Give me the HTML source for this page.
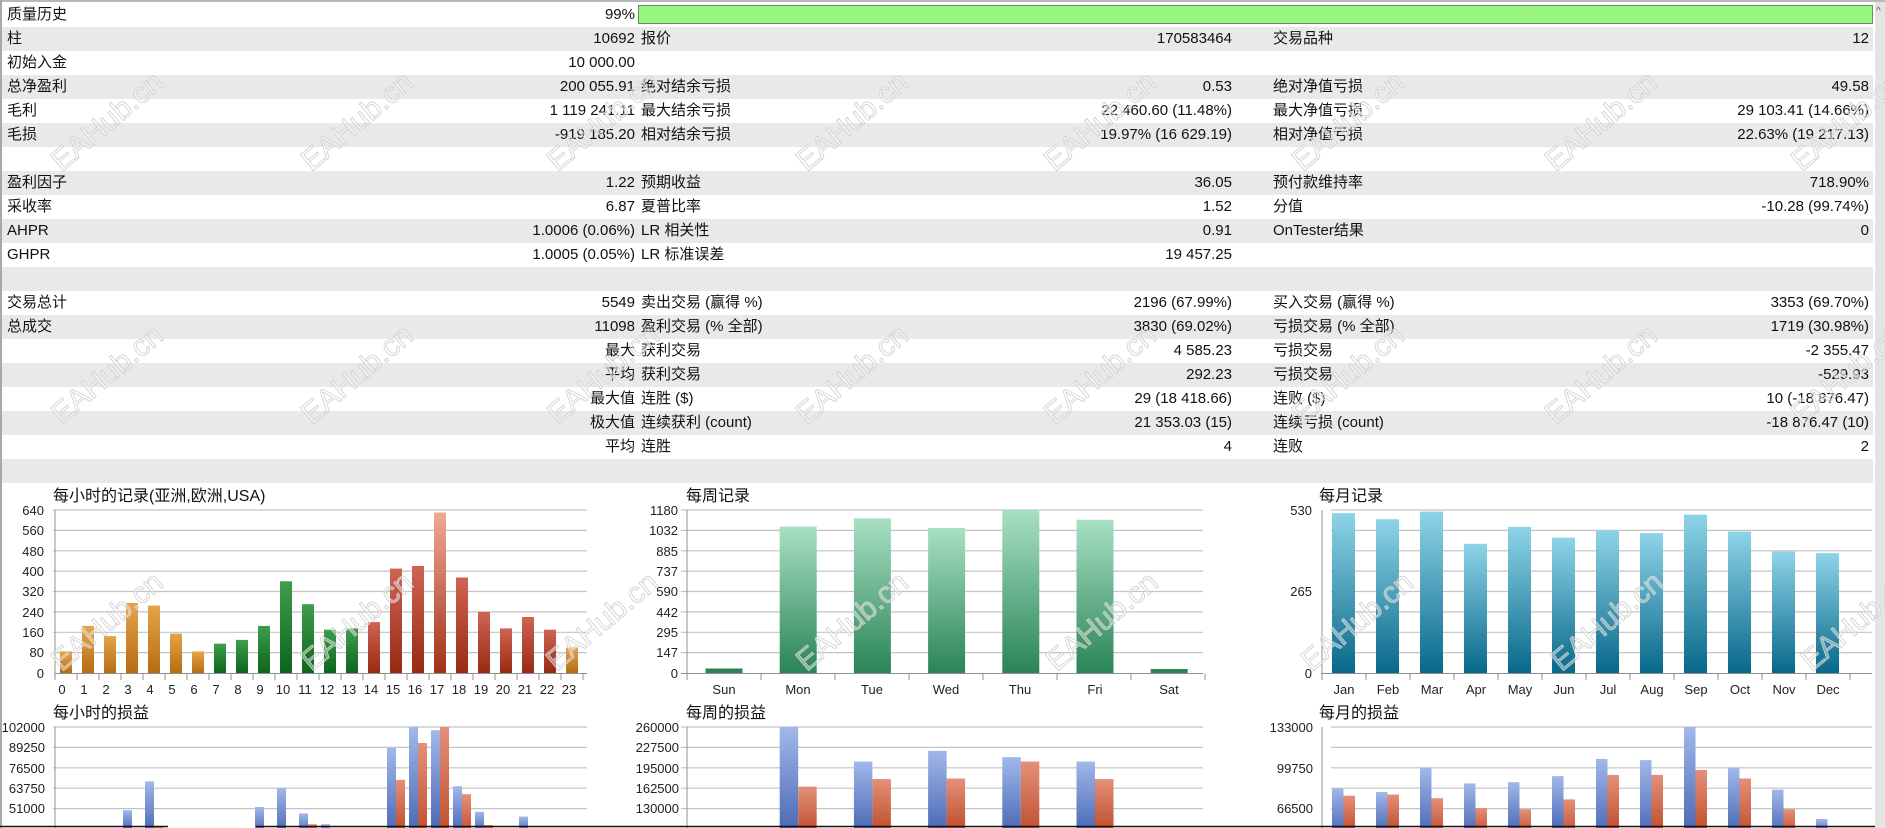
<!DOCTYPE html>
<html><head><meta charset="utf-8"><style>
*{margin:0;padding:0;box-sizing:border-box}
body{width:1885px;height:828px;overflow:hidden;background:#fff;position:relative;font-family:"Liberation Sans","Noto Sans CJK SC",sans-serif;font-size:15px;color:#111}
.r{position:absolute;left:2px;width:1871px;height:24px}
.g{background:#e9e9e9}
.t{position:absolute;line-height:24px;white-space:nowrap}
.wm{position:absolute;font-family:"Liberation Sans",sans-serif;font-size:30px;color:rgba(255,255,255,0.4);-webkit-text-stroke:0.8px #cfcfcf;transform:rotate(-40deg);white-space:nowrap;pointer-events:none}
svg text{font-family:"Liberation Sans","Noto Sans CJK SC",sans-serif}
</style></head><body>
<div style="position:absolute;left:0;top:0;width:1885px;height:2px;background:#b8b8b8"></div>
<div style="position:absolute;left:0;top:0;width:2px;height:828px;background:#a8a8a8"></div>
<div style="position:absolute;left:1875px;top:2px;width:10px;height:826px;background:#e4e4e4"></div>
<div style="position:absolute;left:1876px;top:6px;font-size:10px;color:#555">^</div>

<div class="r" style="top:3px"></div>
<div class="r g" style="top:27px"></div>
<div class="r g" style="top:75px"></div>
<div class="r g" style="top:123px"></div>
<div class="r g" style="top:171px"></div>
<div class="r g" style="top:219px"></div>
<div class="r g" style="top:267px"></div>
<div class="r g" style="top:315px"></div>
<div class="r g" style="top:363px"></div>
<div class="r g" style="top:411px"></div>
<div class="r g" style="top:459px"></div>

<div style="position:absolute;left:638px;top:5px;width:1235px;height:19px;background:#98f57e;border:1px solid #6a8a60"></div>
<div style="position:absolute;left:1530px;top:6px;width:1px;height:17px;background:#b8e8a8"></div>

<div class="t" style="left:7px;top:3px">质量历史</div><div class="t" style="right:1250px;top:3px">99%</div>
<div class="t" style="left:7px;top:27px">柱</div><div class="t" style="right:1250px;top:27px">10692</div>
<div class="t" style="left:7px;top:51px">初始入金</div><div class="t" style="right:1250px;top:51px">10 000.00</div>
<div class="t" style="left:7px;top:75px">总净盈利</div><div class="t" style="right:1250px;top:75px">200 055.91</div>
<div class="t" style="left:7px;top:99px">毛利</div><div class="t" style="right:1250px;top:99px">1 119 241.11</div>
<div class="t" style="left:7px;top:123px">毛损</div><div class="t" style="right:1250px;top:123px">-919 185.20</div>
<div class="t" style="left:7px;top:171px">盈利因子</div><div class="t" style="right:1250px;top:171px">1.22</div>
<div class="t" style="left:7px;top:195px">采收率</div><div class="t" style="right:1250px;top:195px">6.87</div>
<div class="t" style="left:7px;top:219px">AHPR</div><div class="t" style="right:1250px;top:219px">1.0006 (0.06%)</div>
<div class="t" style="left:7px;top:243px">GHPR</div><div class="t" style="right:1250px;top:243px">1.0005 (0.05%)</div>
<div class="t" style="left:7px;top:291px">交易总计</div><div class="t" style="right:1250px;top:291px">5549</div>
<div class="t" style="left:7px;top:315px">总成交</div><div class="t" style="right:1250px;top:315px">11098</div>
<div class="t" style="right:1250px;top:339px">最大</div>
<div class="t" style="right:1250px;top:363px">平均</div>
<div class="t" style="right:1250px;top:387px">最大值</div>
<div class="t" style="right:1250px;top:411px">极大值</div>
<div class="t" style="right:1250px;top:435px">平均</div>
<div class="t" style="left:641px;top:27px">报价</div><div class="t" style="right:653px;top:27px">170583464</div>
<div class="t" style="left:641px;top:75px">绝对结余亏损</div><div class="t" style="right:653px;top:75px">0.53</div>
<div class="t" style="left:641px;top:99px">最大结余亏损</div><div class="t" style="right:653px;top:99px">22 460.60 (11.48%)</div>
<div class="t" style="left:641px;top:123px">相对结余亏损</div><div class="t" style="right:653px;top:123px">19.97% (16 629.19)</div>
<div class="t" style="left:641px;top:171px">预期收益</div><div class="t" style="right:653px;top:171px">36.05</div>
<div class="t" style="left:641px;top:195px">夏普比率</div><div class="t" style="right:653px;top:195px">1.52</div>
<div class="t" style="left:641px;top:219px">LR 相关性</div><div class="t" style="right:653px;top:219px">0.91</div>
<div class="t" style="left:641px;top:243px">LR 标准误差</div><div class="t" style="right:653px;top:243px">19 457.25</div>
<div class="t" style="left:641px;top:291px">卖出交易 (赢得 %)</div><div class="t" style="right:653px;top:291px">2196 (67.99%)</div>
<div class="t" style="left:641px;top:315px">盈利交易 (% 全部)</div><div class="t" style="right:653px;top:315px">3830 (69.02%)</div>
<div class="t" style="left:641px;top:339px">获利交易</div><div class="t" style="right:653px;top:339px">4 585.23</div>
<div class="t" style="left:641px;top:363px">获利交易</div><div class="t" style="right:653px;top:363px">292.23</div>
<div class="t" style="left:641px;top:387px">连胜 ($)</div><div class="t" style="right:653px;top:387px">29 (18 418.66)</div>
<div class="t" style="left:641px;top:411px">连续获利 (count)</div><div class="t" style="right:653px;top:411px">21 353.03 (15)</div>
<div class="t" style="left:641px;top:435px">连胜</div><div class="t" style="right:653px;top:435px">4</div>
<div class="t" style="left:1273px;top:27px">交易品种</div><div class="t" style="right:16px;top:27px">12</div>
<div class="t" style="left:1273px;top:75px">绝对净值亏损</div><div class="t" style="right:16px;top:75px">49.58</div>
<div class="t" style="left:1273px;top:99px">最大净值亏损</div><div class="t" style="right:16px;top:99px">29 103.41 (14.66%)</div>
<div class="t" style="left:1273px;top:123px">相对净值亏损</div><div class="t" style="right:16px;top:123px">22.63% (19 217.13)</div>
<div class="t" style="left:1273px;top:171px">预付款维持率</div><div class="t" style="right:16px;top:171px">718.90%</div>
<div class="t" style="left:1273px;top:195px">分值</div><div class="t" style="right:16px;top:195px">-10.28 (99.74%)</div>
<div class="t" style="left:1273px;top:219px">OnTester结果</div><div class="t" style="right:16px;top:219px">0</div>
<div class="t" style="left:1273px;top:291px">买入交易 (赢得 %)</div><div class="t" style="right:16px;top:291px">3353 (69.70%)</div>
<div class="t" style="left:1273px;top:315px">亏损交易 (% 全部)</div><div class="t" style="right:16px;top:315px">1719 (30.98%)</div>
<div class="t" style="left:1273px;top:339px">亏损交易</div><div class="t" style="right:16px;top:339px">-2 355.47</div>
<div class="t" style="left:1273px;top:363px">亏损交易</div><div class="t" style="right:16px;top:363px">-529.93</div>
<div class="t" style="left:1273px;top:387px">连败 ($)</div><div class="t" style="right:16px;top:387px">10 (-18 876.47)</div>
<div class="t" style="left:1273px;top:411px">连续亏损 (count)</div><div class="t" style="right:16px;top:411px">-18 876.47 (10)</div>
<div class="t" style="left:1273px;top:435px">连败</div><div class="t" style="right:16px;top:435px">2</div>

<svg style="position:absolute;left:0;top:0" width="1875" height="828">
<defs>
<linearGradient id="go" x1="0" y1="0" x2="0" y2="1"><stop offset="0" stop-color="#e6a548"/><stop offset="1" stop-color="#b56c12"/></linearGradient>
<linearGradient id="gg" x1="0" y1="0" x2="0" y2="1"><stop offset="0" stop-color="#3f9d4d"/><stop offset="1" stop-color="#0e641c"/></linearGradient>
<linearGradient id="gr" x1="0" y1="0" x2="0" y2="1"><stop offset="0" stop-color="#cf6453"/><stop offset="1" stop-color="#982a12"/></linearGradient>
<linearGradient id="gp" x1="0" y1="0" x2="0" y2="1"><stop offset="0" stop-color="#f0a894"/><stop offset="1" stop-color="#a0321a"/></linearGradient>
<linearGradient id="gw" x1="0" y1="0" x2="0" y2="1"><stop offset="0" stop-color="#a8e0c4"/><stop offset="1" stop-color="#2a8456"/></linearGradient>
<linearGradient id="gm" x1="0" y1="0" x2="0" y2="1"><stop offset="0" stop-color="#8ed4e8"/><stop offset="1" stop-color="#08688a"/></linearGradient>
<linearGradient id="gb" x1="0" y1="0" x2="0" y2="1"><stop offset="0" stop-color="#a2b8ea"/><stop offset="1" stop-color="#4a68b4"/></linearGradient>
<linearGradient id="gq" x1="0" y1="0" x2="0" y2="1"><stop offset="0" stop-color="#e4907a"/><stop offset="1" stop-color="#c0502e"/></linearGradient>
</defs>
<g font-size="16" fill="#111">
<text x="53" y="501">每小时的记录(亚洲,欧洲,USA)</text>
<text x="686" y="501">每周记录</text>
<text x="1319" y="501">每月记录</text>
<text x="53" y="718">每小时的损益</text>
<text x="686" y="718">每周的损益</text>
<text x="1319" y="718">每月的损益</text>
</g>
<g stroke="#c4c4c4" stroke-width="1.2">
<path d="M53 510H587M53 530.4H587M53 550.8H587M53 571.1H587M53 591.5H587M53 611.9H587M53 632.3H587M53 652.6H587"/>
<path d="M681 510H1203M681 530.4H1203M681 550.8H1203M681 571.1H1203M681 591.5H1203M681 611.9H1203M681 632.3H1203M681 652.6H1203"/>
<path d="M1331 510H1872M1331 530.4H1872M1331 550.8H1872M1331 571.1H1872M1331 591.5H1872M1331 611.9H1872M1331 632.3H1872M1331 652.6H1872"/>
<path d="M53 727H587M53 747.4H587M53 767.8H587M53 788.2H587M53 808.6H587"/>
<path d="M681 727H1203M681 747.4H1203M681 767.8H1203M681 788.2H1203M681 808.6H1203"/>
<path d="M1331 727H1872M1331 747.4H1872M1331 767.8H1872M1331 788.2H1872M1331 808.6H1872"/>
</g>
<g stroke="#909090" stroke-width="1">
<path d="M55 673.5H587M55 673.5V680M77 673.5V680M99 673.5V680M121 673.5V680M143 673.5V680M165 673.5V680M187 673.5V680M209 673.5V680M231 673.5V680M253 673.5V680M275 673.5V680M297 673.5V680M319 673.5V680M341 673.5V680M363 673.5V680M385 673.5V680M407 673.5V680M429 673.5V680M451 673.5V680M473 673.5V680M495 673.5V680M517 673.5V680M539 673.5V680M561 673.5V680M583 673.5V680"/>
<path d="M681 673.5H1203M687 673.5V680M761 673.5V680M835 673.5V680M909 673.5V680M983 673.5V680M1057 673.5V680M1131 673.5V680M1205 673.5V680"/>
<path d="M1321 673.5H1872M1322 673.5V680M1366 673.5V680M1410 673.5V680M1454 673.5V680M1498 673.5V680M1542 673.5V680M1586 673.5V680M1630 673.5V680M1674 673.5V680M1718 673.5V680M1762 673.5V680M1806 673.5V680M1850 673.5V680"/>
<path d="M55 510V674M687 510V674M1322 510V674M55 727V828M687 727V828M1322 727V828"/>
</g>
<g font-size="13" fill="#222" text-anchor="end">
<text x="44" y="515">640</text><text x="44" y="535">560</text><text x="44" y="556">480</text><text x="44" y="576">400</text><text x="44" y="596">320</text><text x="44" y="617">240</text><text x="44" y="637">160</text><text x="44" y="657">80</text><text x="44" y="678">0</text>
<text x="678" y="515">1180</text><text x="678" y="535">1032</text><text x="678" y="556">885</text><text x="678" y="576">737</text><text x="678" y="596">590</text><text x="678" y="617">442</text><text x="678" y="637">295</text><text x="678" y="657">147</text><text x="678" y="678">0</text>
<text x="1312" y="515">530</text><text x="1312" y="596">265</text><text x="1312" y="678">0</text>
<text x="45" y="732">102000</text><text x="45" y="752">89250</text><text x="45" y="773">76500</text><text x="45" y="793">63750</text><text x="45" y="813">51000</text>
<text x="679" y="732">260000</text><text x="679" y="752">227500</text><text x="679" y="773">195000</text><text x="679" y="793">162500</text><text x="679" y="813">130000</text>
<text x="1313" y="732">133000</text><text x="1313" y="773">99750</text><text x="1313" y="813">66500</text>
</g>
<g font-size="13" fill="#222" text-anchor="middle">
<text x="62" y="694">0</text><text x="84" y="694">1</text><text x="106" y="694">2</text><text x="128" y="694">3</text><text x="150" y="694">4</text><text x="172" y="694">5</text><text x="194" y="694">6</text><text x="216" y="694">7</text><text x="238" y="694">8</text><text x="260" y="694">9</text><text x="283" y="694">10</text><text x="305" y="694">11</text><text x="327" y="694">12</text><text x="349" y="694">13</text><text x="371" y="694">14</text><text x="393" y="694">15</text><text x="415" y="694">16</text><text x="437" y="694">17</text><text x="459" y="694">18</text><text x="481" y="694">19</text><text x="503" y="694">20</text><text x="525" y="694">21</text><text x="547" y="694">22</text><text x="569" y="694">23</text>
<text x="724" y="694">Sun</text><text x="798" y="694">Mon</text><text x="872" y="694">Tue</text><text x="946" y="694">Wed</text><text x="1020" y="694">Thu</text><text x="1095" y="694">Fri</text><text x="1169" y="694">Sat</text>
<text x="1344" y="694">Jan</text><text x="1388" y="694">Feb</text><text x="1432" y="694">Mar</text><text x="1476" y="694">Apr</text><text x="1520" y="694">May</text><text x="1564" y="694">Jun</text><text x="1608" y="694">Jul</text><text x="1652" y="694">Aug</text><text x="1696" y="694">Sep</text><text x="1740" y="694">Oct</text><text x="1784" y="694">Nov</text><text x="1828" y="694">Dec</text>
</g>
<rect x="60" y="651.4" width="12" height="21.6" fill="url(#go)"/>
<rect x="82" y="625.9" width="12" height="47.1" fill="url(#go)"/>
<rect x="104" y="636.1" width="12" height="36.9" fill="url(#go)"/>
<rect x="126" y="603" width="12" height="70" fill="url(#go)"/>
<rect x="148" y="605.5" width="12" height="67.5" fill="url(#go)"/>
<rect x="170" y="633.5" width="12" height="39.5" fill="url(#go)"/>
<rect x="192" y="651.4" width="12" height="21.6" fill="url(#go)"/>
<rect x="214" y="643.7" width="12" height="29.3" fill="url(#gg)"/>
<rect x="236" y="639.9" width="12" height="33.1" fill="url(#gg)"/>
<rect x="258" y="625.9" width="12" height="47.1" fill="url(#gg)"/>
<rect x="280" y="581.3" width="12" height="91.7" fill="url(#gg)"/>
<rect x="302" y="604.2" width="12" height="68.8" fill="url(#gg)"/>
<rect x="324" y="629.7" width="12" height="43.3" fill="url(#gg)"/>
<rect x="346" y="628.4" width="12" height="44.6" fill="url(#gg)"/>
<rect x="368" y="622.1" width="12" height="50.9" fill="url(#gr)"/>
<rect x="390" y="568.6" width="12" height="104.4" fill="url(#gr)"/>
<rect x="412" y="566" width="12" height="107" fill="url(#gr)"/>
<rect x="434" y="512.5" width="12" height="160.5" fill="url(#gp)"/>
<rect x="456" y="577.5" width="12" height="95.5" fill="url(#gr)"/>
<rect x="478" y="611.9" width="12" height="61.1" fill="url(#gr)"/>
<rect x="500" y="628.4" width="12" height="44.6" fill="url(#gr)"/>
<rect x="522" y="617" width="12" height="56" fill="url(#gr)"/>
<rect x="544" y="629.7" width="12" height="43.3" fill="url(#gr)"/>
<rect x="566" y="647.5" width="12" height="25.5" fill="url(#go)"/>
<rect x="705.5" y="668.5" width="37" height="4.5" fill="#2a8456"/>
<rect x="779.7" y="526.6" width="37" height="146.4" fill="url(#gw)"/>
<rect x="853.9" y="518.3" width="37" height="154.7" fill="url(#gw)"/>
<rect x="928.1" y="528" width="37" height="145" fill="url(#gw)"/>
<rect x="1002.3" y="510" width="37" height="163" fill="url(#gw)"/>
<rect x="1076.5" y="519.7" width="37" height="153.3" fill="url(#gw)"/>
<rect x="1150.7" y="669" width="37" height="4" fill="#2a8456"/>
<rect x="1332" y="513.1" width="23" height="159.9" fill="url(#gm)"/>
<rect x="1376" y="519.2" width="23" height="153.8" fill="url(#gm)"/>
<rect x="1420" y="511.6" width="23" height="161.4" fill="url(#gm)"/>
<rect x="1464" y="543.8" width="23" height="129.2" fill="url(#gm)"/>
<rect x="1508" y="526.9" width="23" height="146.1" fill="url(#gm)"/>
<rect x="1552" y="537.7" width="23" height="135.3" fill="url(#gm)"/>
<rect x="1596" y="530" width="23" height="143" fill="url(#gm)"/>
<rect x="1640" y="533.1" width="23" height="139.9" fill="url(#gm)"/>
<rect x="1684" y="514.6" width="23" height="158.4" fill="url(#gm)"/>
<rect x="1728" y="531.5" width="23" height="141.5" fill="url(#gm)"/>
<rect x="1772" y="551.5" width="23" height="121.5" fill="url(#gm)"/>
<rect x="1816" y="553.1" width="23" height="119.9" fill="url(#gm)"/>
<g>
<rect x="123" y="810.2" width="9" height="20" fill="url(#gb)"/>
<rect x="145" y="781.4" width="9" height="50" fill="url(#gb)"/><rect x="154" y="826.2" width="9" height="5" fill="url(#gq)"/>
<rect x="255" y="807" width="9" height="25" fill="url(#gb)"/>
<rect x="277" y="787.8" width="9" height="45" fill="url(#gb)"/>
<rect x="299" y="813.4" width="9" height="20" fill="url(#gb)"/><rect x="308" y="824.2" width="9" height="6" fill="url(#gq)"/>
<rect x="321" y="824.2" width="9" height="6" fill="url(#gb)"/>
<rect x="387" y="747.8" width="9" height="85" fill="url(#gb)"/><rect x="396" y="779.8" width="9" height="50" fill="url(#gq)"/>
<rect x="409" y="727" width="9" height="105" fill="url(#gb)"/><rect x="418" y="743" width="9" height="90" fill="url(#gq)"/>
<rect x="431" y="730.2" width="9" height="100" fill="url(#gb)"/><rect x="440" y="727" width="9" height="105" fill="url(#gq)"/>
<rect x="453" y="786.2" width="9" height="45" fill="url(#gb)"/><rect x="462" y="794.2" width="9" height="40" fill="url(#gq)"/>
<rect x="475" y="811.8" width="9" height="20" fill="url(#gb)"/><rect x="484" y="825" width="9" height="5" fill="url(#gq)"/>
<rect x="519" y="816.6" width="9" height="15" fill="url(#gb)"/>
</g>
<rect x="779.7" y="727" width="18.5" height="105" fill="url(#gb)"/><rect x="798.2" y="786.6" width="18.5" height="45" fill="url(#gq)"/>
<rect x="853.9" y="761.5" width="18.5" height="70" fill="url(#gb)"/><rect x="872.4" y="779.1" width="18.5" height="50" fill="url(#gq)"/>
<rect x="928.1" y="750.9" width="18.5" height="80" fill="url(#gb)"/><rect x="946.6" y="778.5" width="18.5" height="50" fill="url(#gq)"/>
<rect x="1002.3" y="757.1" width="18.5" height="75" fill="url(#gb)"/><rect x="1020.8" y="761.5" width="18.5" height="70" fill="url(#gq)"/>
<rect x="1076.5" y="761.5" width="18.5" height="70" fill="url(#gb)"/><rect x="1095" y="779.1" width="18.5" height="50" fill="url(#gq)"/>
<rect x="1332" y="788.4" width="11.5" height="45" fill="url(#gb)"/><rect x="1343.5" y="795.7" width="11.5" height="35" fill="url(#gq)"/>
<rect x="1376" y="792" width="11.5" height="40" fill="url(#gb)"/><rect x="1387.5" y="794.5" width="11.5" height="35" fill="url(#gq)"/>
<rect x="1420" y="767.5" width="11.5" height="65" fill="url(#gb)"/><rect x="1431.5" y="798.2" width="11.5" height="35" fill="url(#gq)"/>
<rect x="1464" y="783.4" width="11.5" height="50" fill="url(#gb)"/><rect x="1475.5" y="808" width="11.5" height="25" fill="url(#gq)"/>
<rect x="1508" y="782.2" width="11.5" height="50" fill="url(#gb)"/><rect x="1519.5" y="809.2" width="11.5" height="25" fill="url(#gq)"/>
<rect x="1552" y="776.1" width="11.5" height="55" fill="url(#gb)"/><rect x="1563.5" y="799.4" width="11.5" height="35" fill="url(#gq)"/>
<rect x="1596" y="758.9" width="11.5" height="75" fill="url(#gb)"/><rect x="1607.5" y="774.9" width="11.5" height="55" fill="url(#gq)"/>
<rect x="1640" y="760.1" width="11.5" height="75" fill="url(#gb)"/><rect x="1651.5" y="774.9" width="11.5" height="55" fill="url(#gq)"/>
<rect x="1684" y="727" width="11.5" height="105" fill="url(#gb)"/><rect x="1695.5" y="770" width="11.5" height="60" fill="url(#gq)"/>
<rect x="1728" y="767.5" width="11.5" height="65" fill="url(#gb)"/><rect x="1739.5" y="778.5" width="11.5" height="55" fill="url(#gq)"/>
<rect x="1772" y="789.6" width="11.5" height="45" fill="url(#gb)"/><rect x="1783.5" y="809.2" width="11.5" height="25" fill="url(#gq)"/>
<rect x="1816" y="819" width="11.5" height="15" fill="url(#gb)"/>
<path d="M0 826.5H168M256 826.5H1875" stroke="#111" stroke-width="1.5"/>
</svg>

<div class="wm" style="left:40px;top:105px">EAHub.cn</div>
<div class="wm" style="left:290px;top:105px">EAHub.cn</div>
<div class="wm" style="left:536px;top:105px">EAHub.cn</div>
<div class="wm" style="left:785px;top:105px">EAHub.cn</div>
<div class="wm" style="left:1033px;top:105px">EAHub.cn</div>
<div class="wm" style="left:1281px;top:105px">EAHub.cn</div>
<div class="wm" style="left:1534px;top:105px">EAHub.cn</div>
<div class="wm" style="left:1780px;top:105px">EAHub.cn</div>
<div class="wm" style="left:40px;top:358px">EAHub.cn</div>
<div class="wm" style="left:290px;top:358px">EAHub.cn</div>
<div class="wm" style="left:536px;top:358px">EAHub.cn</div>
<div class="wm" style="left:785px;top:358px">EAHub.cn</div>
<div class="wm" style="left:1033px;top:358px">EAHub.cn</div>
<div class="wm" style="left:1281px;top:358px">EAHub.cn</div>
<div class="wm" style="left:1534px;top:358px">EAHub.cn</div>
<div class="wm" style="left:1780px;top:358px">EAHub.cn</div>
<div class="wm" style="left:40px;top:605px">EAHub.cn</div>
<div class="wm" style="left:290px;top:605px">EAHub.cn</div>
<div class="wm" style="left:535px;top:605px">EAHub.cn</div>
<div class="wm" style="left:785px;top:605px">EAHub.cn</div>
<div class="wm" style="left:1035px;top:605px">EAHub.cn</div>
<div class="wm" style="left:1290px;top:605px">EAHub.cn</div>
<div class="wm" style="left:1540px;top:605px">EAHub.cn</div>
<div class="wm" style="left:1790px;top:605px">EAHub.cn</div>
</body></html>
